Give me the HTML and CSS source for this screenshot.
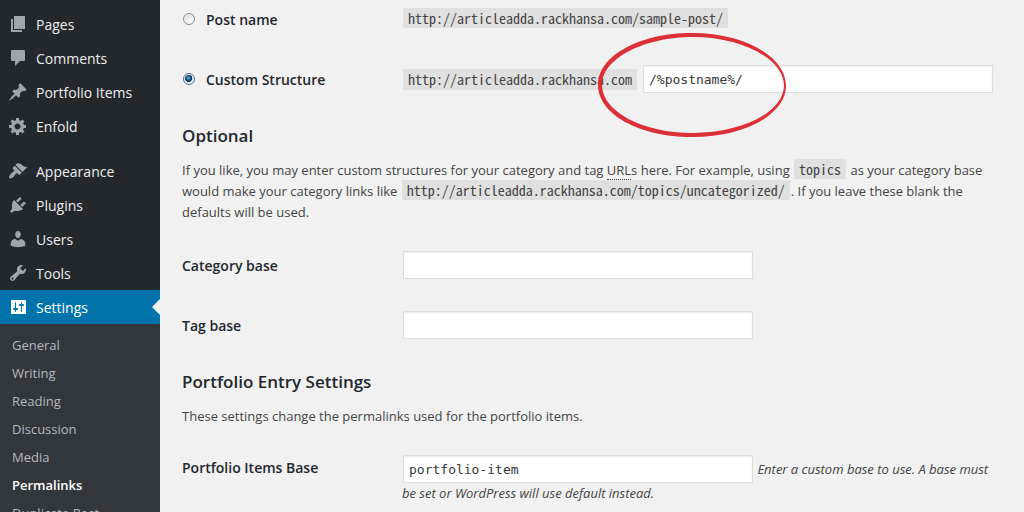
FILE: index.html
```html
<!DOCTYPE html>
<html lang="en">
<head>
<meta charset="utf-8">
<title>Permalink Settings</title>
<link rel="stylesheet" href="styles.css">
</head>
<body>
<div class="layout">
  <nav class="sidebar" aria-label="Main menu">
    <ul class="menu">
      <li><a class="menu-link" href="#pages"><svg class="icon" viewBox="0 0 20 20"><path d="M6 2h11v13H6zM3 5h2v11h9v2H3z"/></svg>Pages</a></li>
      <li><a class="menu-link" href="#comments"><svg class="icon" viewBox="0 0 20 20"><path d="M4 2h12q1 0 1 1v9q0 1-1 1h-4l-5 5v-5H4q-1 0-1-1V3q0-1 1-1z"/></svg>Comments</a></li>
      <li><a class="menu-link" href="#portfolio"><svg class="icon" viewBox="0 0 20 20"><path d="M10.440 3.020l1.820-1.820 6.360 6.350-1.830 1.820c-1.050-.68-2.480-.57-3.410.36l-.75.75c-.92.93-1.040 2.350-.35 3.410l-1.830 1.820-2.410-2.410-2.800 2.790c-.42.42-3.380 2.710-3.800 2.290s1.860-3.390 2.280-3.810l2.790-2.790L4.100 9.360l1.830-1.820c1.050.69 2.480.57 3.400-.36l.75-.75c.93-.92 1.050-2.350.36-3.410z"/></svg>Portfolio Items</a></li>
      <li><a class="menu-link" href="#enfold"><svg class="icon" viewBox="0 0 20 20"><path d="M18 12h-2.180c-.17.7-.44 1.350-.81 1.930l1.540 1.540-2.100 2.100-1.540-1.540c-.58.36-1.230.63-1.910.79V19H8v-2.180c-.68-.16-1.330-.43-1.910-.79l-1.540 1.540-2.120-2.120 1.540-1.540c-.36-.58-.63-1.230-.79-1.910H1V9.030h2.170c.16-.7.440-1.350.8-1.940L2.430 5.550l2.100-2.100 1.540 1.540c.58-.37 1.240-.64 1.930-.81V2h3v2.180c.68.160 1.330.430 1.910.790l1.540-1.540 2.120 2.120-1.540 1.540c.36.59.64 1.240.8 1.940H18V12zm-8.500 1.500c1.660 0 3-1.340 3-3s-1.340-3-3-3-3 1.340-3 3 1.340 3 3 3z"/></svg>Enfold</a></li>
    </ul>
    <ul class="menu">
      <li><a class="menu-link" href="#appearance"><svg class="icon" viewBox="0 0 20 20"><path d="M14.480 11.060L7.410 3.990l1.500-1.500c.5-.56 2.300-.47 3.510.32 1.210.8 1.430 1.280 2.910 2.100 1.180.64 2.450 1.260 4.450.850zm-.71.710L6.700 4.700 4.930 6.470c-.39.39-.39 1.020 0 1.410l1.060 1.060c.39.39.39 1.030 0 1.420-.6.600-1.430 1.110-2.210 1.690-.35.260-.7.530-1.010.840C1.430 14.230.4 16.080 1.400 17.070c.99 1 2.840-.03 4.180-1.360.31-.31.580-.66.850-1.020.57-.78 1.080-1.610 1.690-2.210.39-.39 1.020-.39 1.410 0l1.060 1.060c.39.39 1.020.39 1.410 0z"/></svg>Appearance</a></li>
      <li><a class="menu-link" href="#plugins"><svg class="icon" viewBox="0 0 20 20"><path d="M13.110 4.360L9.870 7.600 8 5.730l3.240-3.240c.35-.34 1.050-.2 1.560.32.52.51.66 1.210.31 1.550zm-8 1.770l.91-1.120 9.010 9.010-1.190.84c-.71.71-2.630 1.160-3.820 1.160H6.140L4.900 17.260c-.59.59-1.540.59-2.120 0-.59-.58-.59-1.530 0-2.120l1.240-1.240v-3.880c0-1.130.4-3.190 1.090-3.890zm7.260 3.970l3.240-3.240c.34-.35 1.040-.21 1.550.31.52.51.66 1.210.31 1.550l-3.240 3.250z"/></svg>Plugins</a></li>
      <li><a class="menu-link" href="#users"><svg class="icon" viewBox="0 0 20 20"><path d="M10 9.250c-2.270 0-2.730-3.440-2.730-3.440C7 4.020 7.820 2 9.970 2c2.160 0 2.980 2.020 2.710 3.810 0 0-.41 3.440-2.680 3.440zm0 2.570L12.720 10c2.390 0 4.520 2.330 4.520 4.530v2.490s-3.650 1.130-7.240 1.130c-3.650 0-7.240-1.130-7.240-1.130v-2.490c0-2.250 1.940-4.480 4.470-4.480z"/></svg>Users</a></li>
      <li><a class="menu-link" href="#tools"><svg class="icon" viewBox="0 0 20 20"><path d="M16.680 9.770c-1.340 1.340-3.300 1.670-4.950.99l-5.410 6.520c-.99.99-2.590.99-3.580 0s-.99-2.590 0-3.570l6.520-5.420c-.68-1.650-.35-3.610.99-4.950 1.280-1.280 3.120-1.620 4.720-1.060l-2.890 2.890 2.820 2.820 2.860-2.870c.53 1.580.18 3.390-1.080 4.650zM3.810 16.210c.4.390 1.040.39 1.430 0 .4-.4.400-1.040 0-1.430-.39-.4-1.030-.4-1.430 0-.39.390-.39 1.030 0 1.430z"/></svg>Tools</a></li>
      <li>
        <a class="menu-link menu-link-open" href="#settings"><svg class="icon" viewBox="0 0 20 20"><path d="M18 16V4c0-.550-.450-1-1-1H4c-.550 0-1 .450-1 1v12c0 .550.450 1 1 1h13c.550 0 1-.450 1-1zM8 11h1c.550 0 1 .450 1 1s-.450 1-1 1H8v1.500c0 .280-.220.500-.500.500s-.500-.220-.500-.500V13H6c-.550 0-1-.450-1-1s.450-1 1-1h1V5.500c0-.280.220-.500.500-.500s.500.220.500.500zm5-2h-1c-.550 0-1-.450-1-1s.450-1 1-1h1V5.500c0-.280.220-.500.500-.500s.500.220.500.500V7h1c.550 0 1 .450 1 1s-.450 1-1 1h-1v5.500c0 .280-.220.500-.500.500s-.500-.220-.500-.500z"/></svg>Settings</a>
        <ul class="submenu">
          <li><a class="submenu-link" href="#general">General</a></li>
          <li><a class="submenu-link" href="#writing">Writing</a></li>
          <li><a class="submenu-link" href="#reading">Reading</a></li>
          <li><a class="submenu-link" href="#discussion">Discussion</a></li>
          <li><a class="submenu-link" href="#media">Media</a></li>
          <li><a class="submenu-link submenu-link-current" href="#permalinks" aria-current="page">Permalinks</a></li>
          <li><a class="submenu-link" href="#duplicate-post">Duplicate Post</a></li>
        </ul>
      </li>
    </ul>
  </nav>
  <main class="content">
    <form>
      <div class="row">
        <label class="row-label"><input class="radio" type="radio" name="structure">Post name</label>
        <div class="field"><code class="code">http://articleadda.rackhansa.com/sample-post/</code></div>
      </div>
      <div class="row">
        <label class="row-label"><input class="radio" type="radio" name="structure" checked>Custom Structure</label>
        <div class="field field-custom">
          <code class="code">http://articleadda.rackhansa.com</code>
          <input class="text-input" type="text" aria-label="Custom structure" value="/%postname%/">
          <svg class="marker" viewBox="0 0 190 106"><path fill-rule="evenodd" d="M95 1C148 1 189 25 189 54C189 82 148 105 95 105C42 105 1 82 1 53C1 24 42 1 95 1ZM96 5C48 5 5 26 5 53C5 80 47 101 95 101C144 101 186 81 187 54C187 27 145 5 96 5Z"/></svg>
        </div>
      </div>

      <h2 class="heading">Optional</h2>
      <p class="text">If you like, you may enter custom structures for your category and tag <abbr class="abbr" title="Universal Resource Locator">URL</abbr>s here. For example, using <code class="code">topics</code> as your category base would make your category links like <code class="code">http://articleadda.rackhansa.com/topics/uncategorized/</code>. If you leave these blank the defaults will be used.</p>
      <div class="row">
        <label class="row-label" for="category-base">Category base</label>
        <div class="field"><input class="text-input" id="category-base" type="text"></div>
      </div>
      <div class="row">
        <label class="row-label" for="tag-base">Tag base</label>
        <div class="field"><input class="text-input" id="tag-base" type="text"></div>
      </div>

      <h2 class="heading">Portfolio Entry Settings</h2>
      <p class="text">These settings change the permalinks used for the portfolio items.</p>
      <div class="row row-top">
        <label class="row-label" for="portfolio-base">Portfolio Items Base</label>
        <div class="field"><input class="text-input" id="portfolio-base" type="text" value="portfolio-item"> <em>Enter a custom base to use. A base must be set or WordPress will use default instead.</em></div>
      </div>
    </form>
  </main>
</div>
</body>
</html>
```
FILE: styles.css
```css
* { box-sizing: border-box; }

html { height: 100%; }

body {
  margin: 0;
  height: 100%;
  overflow: hidden;
  background: #f1f1f1;
  color: #444;
  font: 13px/21px "Open Sans", sans-serif;
}

.layout {
  display: flex;
  min-height: 100%;
}

.sidebar {
  flex: 0 0 160px;
  padding-top: 7px;
  background: #23282d;
}

.menu,
.submenu {
  margin: 0;
  padding: 0;
  list-style: none;
}

.menu + .menu { margin-top: 11px; }

.menu-link {
  display: flex;
  align-items: center;
  gap: 8px;
  height: 34px;
  padding-left: 8px;
  color: #eee;
  font-size: 14px;
  text-decoration: none;
}

.icon {
  width: 20px;
  height: 20px;
  fill: #a0a5aa;
}

.menu-link-open {
  position: relative;
  background: #0073aa;
  color: #fff;
}

.menu-link-open .icon { fill: #fff; }

.menu-link-open::after {
  content: "";
  position: absolute;
  right: 0;
  top: 9px;
  border: 8px solid transparent;
  border-left-width: 0;
  border-right-color: #f1f1f1;
}

.submenu {
  padding: 7px 0;
  background: #32373c;
}

.submenu-link {
  display: block;
  padding-left: 12px;
  color: #b4b9be;
  line-height: 28px;
  text-decoration: none;
}

.submenu-link-current {
  color: #fff;
  font-weight: 600;
}

.content {
  flex: 1;
  min-width: 0;
  padding: 5px 31px 0 22px;
}

.row {
  display: flex;
  align-items: center;
  min-height: 28px;
}

.row + .row { margin-top: 32px; }

.row-top { align-items: flex-start; }
.row-top .row-label { padding-top: 2px; }

.row-label {
  display: flex;
  align-items: center;
  flex: 0 0 220px;
  color: #23282d;
  font-size: 14px;
  font-weight: 600;
}

.radio {
  appearance: none;
  width: 12px;
  height: 12px;
  margin: 0 11px 0 1px;
  border: 1px solid #8e8f8f;
  border-radius: 50%;
  background: radial-gradient(circle at 60% 60%, #f4f4f4 20%, #cbcfd5 90%);
  box-shadow: inset 0 0 0 1px #f4f4f4;
}

.radio:checked {
  border-color: #5b7285;
  background: radial-gradient(circle at 45% 40%, #5ab8dc 0, #12507e 30%, #0b2c4a 45%, #d8eaf3 50%);
}

.field {
  flex: 1;
  min-width: 0;
}

.field-custom {
  position: relative;
  display: flex;
  align-items: center;
  gap: 4px;
}

.code {
  margin: 0 1px;
  padding: 0 5px;
  background: #e0e0e0;
  font: 14px/16px "Noto Sans Mono CJK SC", "DejaVu Sans Mono", monospace;
}

.field-custom .code { line-height: 21px; }

.text-input {
  width: 350px;
  max-width: 100%;
  height: 28px;
  margin: 0 1px;
  padding: 3px 5px;
  border: 1px solid #ddd;
  background: #fff;
  box-shadow: inset 0 1px 2px rgba(0, 0, 0, 0.07);
  color: #32373c;
  font: 13px/20px "DejaVu Sans Mono", monospace;
}

.field-custom .text-input {
  flex: 1;
  margin-right: 0;
}

.marker {
  position: absolute;
  top: -33px;
  left: 195px;
  width: 190px;
  height: 106px;
  fill: #dc3037;
  pointer-events: none;
}

.heading {
  margin: 31px 0 12px;
  color: #23282d;
  font-size: 17px;
  font-weight: 600;
  line-height: 24px;
}

.text { margin: 0 0 28px; }

.abbr {
  border-bottom: 1px dotted #444;
  text-decoration: none;
}
```
